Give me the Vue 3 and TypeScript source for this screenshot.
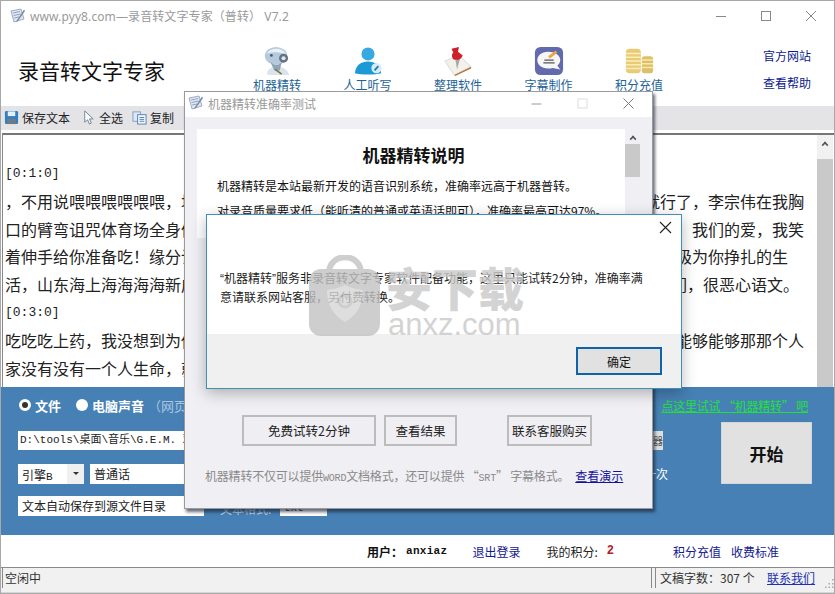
<script setup lang="ts">
interface TextLine { left: string; right?: string; pad?: number; mono?: boolean }
const navItems = [
  { key: 'robot', label: '机器精转' },
  { key: 'person', label: '人工听写' },
  { key: 'pin', label: '整理软件' },
  { key: 'sub', label: '字幕制作' },
  { key: 'coin', label: '积分充值' },
]
const lines: TextLine[] = [
  { left: '[0:1:0]', mono: true },
  { left: '，不用说喂喂喂喂喂喂，坦', right: '就行了，李宗伟在我胸' },
  { left: '口的臂弯诅咒体育场全身体', right: '我们的爱，我笑' },
  { left: '着伸手给你准备吃！缘分让', right: '极为你挣扎的生', pad: 16 },
  { left: '活，山东海上海海海海新成', right: '们，很恶心语文。', pad: 5 },
  { left: '[0:3:0]', mono: true },
  { left: '吃吃吃上药，我没想到为你', right: '能够能够那那个人' },
  { left: '家没有没有一个人生命，就' },
]
</script>

<template>
  <div class="win">
    <header class="titlebar">
      <svg class="appicon" width="16" height="16" viewBox="0 0 16 16">
        <path d="M1 3 L11 1 L14 11 L4 14 Z" fill="#dfe6f2" stroke="#8a9ab8" stroke-width="0.8" />
        <path d="M3 5 L10 3.5 M3.6 7.5 L10.6 6 M4.2 10 L9 9" stroke="#7f92b5" stroke-width="0.8" />
        <path d="M14 1.5 L7 12 L5.8 14 L8 13 L15 3 Z" fill="#7a8aa6" />
      </svg>
      <span class="titletext">www.pyy8.com—录音转文字专家（普转） V7.2</span>
      <div class="wincontrols">
        <svg width="12" height="12" viewBox="0 0 12 12"><path d="M1 6.5H11" stroke="#888" /></svg>
        <svg width="12" height="12" viewBox="0 0 12 12"><rect x="1.5" y="1.5" width="9" height="9" fill="none" stroke="#888" /></svg>
        <svg width="12" height="12" viewBox="0 0 12 12"><path d="M1 1L11 11M11 1L1 11" stroke="#888" /></svg>
      </div>
    </header>

    <section class="brandbar">
      <h1 class="brand">录音转文字专家</h1>
      <nav class="nav">
        <div v-for="item in navItems" :key="item.key" class="navitem">
          <svg v-if="item.key === 'robot'" class="navicon" viewBox="0 0 32 32">
            <path d="M5 30 C6 24 12 21 18 22 C25 23 28 27 29 31 L9 31 Z" fill="#dbe4ec" />
            <ellipse cx="15" cy="10.5" rx="12" ry="9.5" fill="#b5cbdd" />
            <path d="M5 8 C9 1 22 1 26 9 C19 6 12 6 5 8Z" fill="#e8f1f8" />
            <path d="M9 17 C13 21 18 21 21 17 L19 26 L13 26 Z" fill="#8fa4b5" />
            <circle cx="23" cy="13" r="4.8" fill="#63737f" />
            <circle cx="23" cy="13" r="2.2" fill="#dfe7ee" />
            <circle cx="10" cy="10" r="1.5" fill="#4d5d6a" />
            <path d="M14 25 L21 30" stroke="#6c7a3a" stroke-width="1.6" />
          </svg>
          <svg v-else-if="item.key === 'person'" class="navicon" viewBox="0 0 32 32">
            <circle cx="16" cy="8.5" r="7" fill="#36a9e1" />
            <path d="M2 29 C3 20 9 16.5 16 16.5 C23 16.5 29 20 30 29 C24 31 8 31 2 29Z" fill="#1b9ad6" />
            <circle cx="25" cy="23.5" r="5.5" fill="#d8ecf7" />
            <path d="M23 26 L27 21.5" stroke="#1b7fb5" stroke-width="2" />
          </svg>
          <svg v-else-if="item.key === 'pin'" class="navicon" viewBox="0 0 32 32">
            <path d="M2 16 L17 10 L30 22 L12 31 Z" fill="#f2f1ec" stroke="#d9d6cf" />
            <path d="M12 31 L30 22 L30 24 L13 32 Z" fill="#b4753f" />
            <path d="M13 13 L15 25 L18 14 Z" fill="#a9a9a9" />
            <path d="M9 3 L17 1 L16 6 L21 10 C20 14 15 16 11 14 C9 12 9 9 11 7 Z" fill="#cf1f2b" />
          </svg>
          <svg v-else-if="item.key === 'sub'" class="navicon" viewBox="0 0 32 32">
            <rect width="30" height="30" x="1" y="1" rx="6" fill="#6369ad" />
            <path d="M15 6 C22 6 28 9.5 28 15 C28 18 26 20 25 21 L28 25 L20 23.5 C18 24 17 24 15 24 C8 24 3.5 20 3.5 15 C3.5 10 8 6 15 6Z" fill="#f6f6f6" />
            <path d="M10 18H22M11 15H21" stroke="#555" stroke-width="1.3" />
            <path d="M16 12 L24 6" stroke="#e8a83a" stroke-width="3" />
          </svg>
          <svg v-else class="navicon" viewBox="0 0 32 32">
            <rect x="2" y="3" width="16" height="26" rx="4" fill="#e8cb78" />
            <path d="M2 8H18M2 12H18M2 16H18M2 20H18M2 24H18" stroke="#fbeeb4" stroke-width="1.5" />
            <rect x="19" y="11" width="12" height="18" rx="3" fill="#dfbe68" />
            <path d="M19 15H31M19 19H31M19 23H31" stroke="#f9e9a8" stroke-width="1.5" />
          </svg>
          <span class="navlabel">{{ item.label }}</span>
        </div>
      </nav>
      <div class="sidelinks">
        <a>官方网站</a>
        <a>查看帮助</a>
      </div>
    </section>

    <section class="toolbar">
      <svg class="tool-icon" viewBox="0 0 16 16">
        <rect x="1" y="1" width="14" height="14" rx="1.5" fill="#2f7fc1" />
        <rect x="4" y="1.5" width="8" height="5" fill="#e6f0f8" />
        <rect x="3.5" y="9" width="9" height="6" fill="#6e7a86" />
      </svg>
      <span class="tool-text">保存文本</span>
      <svg class="tool-icon cursor" viewBox="0 0 16 16">
        <path d="M4 1 L4 13 L7 10.5 L9 15 L11 14 L9 9.5 L13 9.5 Z" fill="#fff" stroke="#6d7f96" />
      </svg>
      <span class="tool-text">全选</span>
      <svg class="tool-icon copy" viewBox="0 0 16 16">
        <rect x="1" y="2" width="8" height="10" fill="#dce8f5" stroke="#7f9ec4" />
        <rect x="6" y="5" width="9" height="10" fill="#f5f9fd" stroke="#4f7fb5" />
        <path d="M8 8H13M8 10H13M8 12H13" stroke="#4f7fb5" />
      </svg>
      <span class="tool-text">复制</span>
    </section>

    <main class="editor">
      <div class="textcol">
        <div
          v-for="(line, i) in lines"
          :key="i"
          class="line"
          :style="line.pad ? { paddingRight: line.pad + 'px' } : undefined"
        >
          <span :class="{ mono: line.mono }">{{ line.left }}</span>
          <span v-if="line.right">{{ line.right }}</span>
        </div>
      </div>
      <div class="vscroll">
        <span class="chev"></span>
        <span class="vthumb"></span>
      </div>
    </main>

    <section class="panel">
      <div class="radios">
        <span class="radio checked"></span>
        <b class="radiolabel">文件</b>
        <span class="radio second"></span>
        <b class="radiolabel">电脑声音</b>
        <span class="hint">（网页</span>
        <a class="greenlink">点这里试试 “机器精转” 吧</a>
      </div>
      <div class="panelbody">
        <div class="fields">
          <div class="pathrow">
            <div class="pathinput">D:\tools\桌面\音乐\G.E.M. 邓紫棋</div>
            <span class="browse">器</span>
          </div>
          <div class="selectrow">
            <div class="engine"><span>引擎<i class="mini">B</i></span><span class="caret"></span></div>
            <div class="lang">普通话</div>
            <span class="once">一次</span>
          </div>
          <div class="saverow">
            <div class="savebox">文本自动保存到源文件目录</div>
            <span class="fmtlabel">文本格式:</span>
            <div class="fmt">txt</div>
          </div>
        </div>
        <button class="start">开始</button>
      </div>
    </section>

    <section class="userbar">
      <b class="userlabel">用户：</b><b class="username">anxiaz</b>
      <a class="logout">退出登录</a>
      <span class="score">我的积分:</span><b class="points">2</b>
      <a class="recharge">积分充值</a>
      <a class="fees">收费标准</a>
    </section>

    <footer class="statusbar">
      <div class="status-main">空闲中</div>
      <div class="status-count">文稿字数：307 个</div>
      <a class="contact">联系我们</a>
      <svg class="grip" width="10" height="10" viewBox="0 0 10 10">
        <path d="M8 1h1.5v1.5H8zM4.5 5H6v1.5H4.5zM8 5h1.5v1.5H8zM1 8.5h1.5V10H1zM4.5 8.5H6V10H4.5zM8 8.5h1.5V10H8z" fill="#aaa" />
      </svg>
    </footer>

    <!-- 机器精转准确率测试 floating window -->
    <div class="dlg-test">
      <div class="dlg-title">
        <svg class="appicon" width="16" height="16" viewBox="0 0 16 16">
          <path d="M1 3 L11 1 L14 11 L4 14 Z" fill="#dfe6f2" stroke="#8a9ab8" stroke-width="0.8" />
          <path d="M3 5 L10 3.5 M3.6 7.5 L10.6 6 M4.2 10 L9 9" stroke="#7f92b5" stroke-width="0.8" />
          <path d="M14 1.5 L7 12 L5.8 14 L8 13 L15 3 Z" fill="#7a8aa6" />
        </svg>
        <span>机器精转准确率测试</span>
        <div class="dlg-controls">
          <svg width="11" height="11" viewBox="0 0 11 11"><path d="M0.5 6H10.5" stroke="#999" /></svg>
          <svg width="11" height="11" viewBox="0 0 11 11"><rect x="1" y="1" width="9" height="9" fill="none" stroke="#ddd" /></svg>
          <svg width="11" height="11" viewBox="0 0 11 11"><path d="M0.5 0.5L10.5 10.5M10.5 0.5L0.5 10.5" stroke="#777" /></svg>
        </div>
      </div>
      <div class="dlg-body">
        <div class="intro">
          <div class="intro-text">
            <h2>机器精转说明</h2>
            <p>机器精转是本站最新开发的语音识别系统，准确率远高于机器普转。</p>
            <p>对录音质量要求低（能听清的普通或英语话即可），准确率最高可达97%。</p>
          </div>
          <div class="iscroll">
            <span class="chev"></span>
            <span class="ithumb"></span>
          </div>
        </div>
        <div class="actions">
          <button class="act a1">免费试转2分钟</button>
          <button class="act a2">查看结果</button>
          <button class="act a3">联系客服购买</button>
        </div>
        <div class="note">
          <span>机器精转不仅可以提供<i class="small">WORD</i>文档格式，还可以提供 “<i class="small">SRT</i>” 字幕格式。</span>
          <a>查看演示</a>
        </div>
      </div>
    </div>

    <!-- message box -->
    <div class="msgbox">
      <div class="msg-main">
        <svg class="msg-close" width="13" height="13" viewBox="0 0 13 13"><path d="M1 1L12 12M12 1L1 12" stroke="#222" stroke-width="1.1" /></svg>
        <p><span class="q">“</span>机器精转<span class="q">”</span>服务非录音转文字专家软件配备功能，这里只能试转2分钟，准确率满意请联系网站客服，另付费转换。</p>
      </div>
      <div class="msg-foot">
        <button class="ok">确定</button>
      </div>
    </div>

    <!-- watermark -->
    <div class="watermark">
      <svg width="72" height="82" viewBox="0 0 72 82">
        <path d="M20 18 C20 -3 52 -3 52 18" fill="none" stroke="#c2c2c2" stroke-width="6" />
        <rect x="0" y="14" width="71" height="67" rx="12" fill="#c2c2c2" />
        <path d="M36 30 C43 34 50 34 54 35 C54 50 48 60 36 67 C24 60 18 50 18 35 C22 34 29 34 36 30Z" fill="#d6d6d6" />
        <circle cx="36" cy="46" r="6" fill="none" stroke="#c2c2c2" stroke-width="3" />
      </svg>
      <div class="wm-text">
        <span class="wm-cn">安下载</span>
        <span class="wm-en">anxz.com</span>
      </div>
    </div>
  </div>
</template>

<style>
html, body { margin: 0; padding: 0; background: #fff; overflow: hidden; }
</style>

<style scoped>
.win {
  position: relative;
  width: 835px;
  height: 594px;
  box-sizing: border-box;
  display: flex;
  flex-direction: column;
  overflow: hidden;
  background: #fff;
  border: 1px solid #a8a8a8;
  font-family: "Noto Sans CJK SC", "Liberation Sans", sans-serif;
  font-size: 12px;
  color: #111;
}
a { cursor: pointer; }
button { font-family: inherit; padding: 0; }
.titlebar {
  height: 30px;
  display: flex;
  align-items: center;
  padding-left: 9px;
  flex: none;
}
.appicon { flex: none; }
.titletext {
  margin-left: 4px;
  color: #9a9a9a;
  font-size: 12px;
  font-family: "Noto Sans", "Noto Sans CJK SC", sans-serif;
  letter-spacing: 0.1px;
}
.wincontrols {
  margin-left: auto;
  display: flex;
  gap: 33px;
  padding-right: 17px;
}
.brandbar {
  height: 75px;
  flex: none;
  display: flex;
}
.brand {
  margin: 25px 0 0 17px;
  width: 200px;
  font-size: 21px;
  font-weight: 400;
  line-height: 28px;
  color: #111;
}
.nav {
  display: flex;
  margin-left: 35px;
  gap: 42.5px;
  padding-top: 15px;
  height: 60px;
}
.navitem {
  width: 48px;
  display: flex;
  flex-direction: column;
  align-items: center;
}
.navicon { width: 30px; height: 30px; flex: none; }
.navlabel {
  color: #1c6396;
  font-size: 12px;
  line-height: 16px;
  margin-top: 1px;
  white-space: nowrap;
}
.sidelinks {
  margin-left: auto;
  display: flex;
  flex-direction: column;
  gap: 11px;
  padding: 17px 23px 0 0;
}
.sidelinks a { color: #0a1a8c; font-size: 12px; line-height: 16px; }
.toolbar {
  height: 24px;
  flex: none;
  background: #e4e4e7;
  display: flex;
  align-items: center;
  padding: 0 0 2px 3px;
  box-sizing: border-box;
}
.tool-icon { width: 15px; height: 15px; flex: none; }
.tool-text { margin-left: 3px; color: #222; }
.cursor { margin-left: 11px; }
.copy { margin-left: 9px; }
.editor {
  margin-top: 3px;
  height: 254px;
  flex: none;
  display: flex;
  border-top: 2px solid #777;
  border-left: 1px solid #888;
  box-sizing: border-box;
  background: #fff;
  margin-left: 1px;
}
.textcol {
  flex: 1;
  min-width: 0;
  padding: 25px 13px 0 2px;
  overflow: hidden;
}
.line {
  display: flex;
  justify-content: space-between;
  height: 27.8px;
  line-height: 27.8px;
  font-size: 16px;
  color: #222;
  white-space: nowrap;
}
.mono { font-family: "Liberation Mono", monospace; font-size: 13px; }
.vscroll {
  width: 16px;
  flex: none;
  margin-right: 1px;
  display: flex;
  flex-direction: column;
  align-items: center;
  background: #f1f1f1;
}
.chev {
  width: 6px;
  height: 6px;
  margin-top: 7px;
  border-left: 2px solid #555;
  border-top: 2px solid #555;
  transform: rotate(45deg) scale(0.8);
  box-sizing: border-box;
  flex: none;
}
.vthumb {
  margin-top: 11px;
  flex: 1;
  width: 100%;
  background: #c9c9c9;
}
.panel {
  height: 148px;
  flex: none;
  box-sizing: border-box;
  background: #4680b4;
  padding: 9px 22px 0 17px;
  color: #fff;
}
.radios {
  height: 18px;
  display: flex;
  align-items: center;
}
.radio {
  width: 12px;
  height: 12px;
  border-radius: 50%;
  background: #fff;
  flex: none;
  box-sizing: border-box;
  margin-left: 1px;
}
.radio.checked { border: 3px solid #fff; background: #333; }
.radio.second { margin-left: 15px; }
.radiolabel { margin-left: 4px; font-size: 13px; color: #fff; }
.hint { margin-left: 4px; color: #a9c6df; font-size: 13px; }
.greenlink {
  margin-left: auto;
  margin-right: 4px;
  color: #22e03a;
  text-decoration: underline;
  font-size: 12px;
  letter-spacing: -0.2px;
}
.panelbody {
  display: flex;
  margin-top: 8px;
}
.fields {
  flex: 1;
  min-width: 0;
  padding-top: 9px;
  display: flex;
  flex-direction: column;
}
.pathrow { display: flex; height: 19px; padding-right: 58px; }
.pathinput {
  flex: 1;
  background: #fff;
  color: #222;
  font-family: "Liberation Mono", "Noto Sans CJK SC", monospace;
  font-size: 11px;
  line-height: 19px;
  padding-left: 2px;
  white-space: nowrap;
  overflow: hidden;
}
.browse {
  width: 10px;
  background: #ddd;
  color: #555;
  font-size: 10px;
  line-height: 19px;
  overflow: hidden;
}
.selectrow {
  margin-top: 14px;
  height: 20px;
  display: flex;
  color: #222;
}
.engine {
  width: 66px;
  background: #fff;
  display: flex;
  justify-content: space-between;
  align-items: center;
  padding-left: 4px;
  box-sizing: border-box;
  font-size: 12px;
}
.mini { font-style: normal; font-family: "Liberation Mono", monospace; font-size: 11px; }
.caret {
  width: 17px;
  height: 20px;
  background: #f0f0f0;
  position: relative;
}
.caret::after {
  content: "";
  position: absolute;
  left: 6px;
  top: 8px;
  border-left: 3px solid transparent;
  border-right: 3px solid transparent;
  border-top: 3px solid #333;
}
.lang {
  margin-left: 6px;
  width: 110px;
  background: #fff;
  padding-left: 4px;
  font-size: 12px;
  line-height: 20px;
}
.once { margin-left: auto; margin-right: 53px; color: #fff; font-size: 12px; line-height: 20px; }
.saverow { margin-top: 12px; height: 20px; display: flex; }
.savebox {
  width: 186px;
  background: #fff;
  color: #222;
  font-size: 12px;
  line-height: 20px;
  padding-left: 4px;
  box-sizing: border-box;
  white-space: nowrap;
}
.fmtlabel { margin-left: 16px; width: 60px; color: #bcd2e6; line-height: 25px; height: 20px; overflow: hidden; }
.fmt {
  width: 47px;
  height: 20px;
  background: #fff;
  color: #333;
  font-family: "Liberation Mono", monospace;
  font-size: 11px;
  line-height: 25px;
  padding-left: 4px;
  box-sizing: border-box;
  overflow: hidden;
}
.start {
  width: 91px;
  height: 62px;
  flex: none;
  background: #e1e1e1;
  border: 1px solid #cfd6dc;
  font-size: 17px;
  font-weight: 700;
  color: #111;
}
.userbar {
  height: 32px;
  flex: none;
  display: flex;
  align-items: center;
  padding-left: 366px;
  box-sizing: border-box;
}
.userlabel { font-size: 12px; }
.username { font-family: "Liberation Mono", monospace; font-size: 11px; margin-left: 3px; letter-spacing: 0.3px; }
.logout { margin-left: 25px; color: #12208c; }
.score { margin-left: 26px; color: #222; }
.points { margin-left: 9px; color: #b32025; font-family: "Liberation Mono", monospace; font-size: 12px; }
.recharge { margin-left: 59px; color: #12208c; }
.fees { margin-left: 10px; color: #12208c; }
.statusbar {
  flex: 1;
  min-height: 0;
  display: flex;
  align-items: stretch;
  background: #f1f1f1;
  border-top: 1px solid #8a8a8a;
  padding-bottom: 4px;
  border-bottom: 1px solid #d5d5d5;
}
.status-main {
  width: 650px;
  margin-left: 1px;
  border-left: 1px solid #888;
  padding-left: 2px;
  line-height: 20px;
  color: #333;
  flex: none;
  box-sizing: border-box;
  border-right: 1px solid #888;
}
.status-count {
  margin-left: 3px;
  border-left: 1px solid #888;
  padding-left: 4px;
  width: 103px;
  box-sizing: border-box;
  line-height: 20px;
  color: #333;
  white-space: nowrap;
  flex: none;
}
.contact { margin-left: 9px; color: #2030b0; text-decoration: underline; line-height: 20px; }
.grip { margin: 10px 0 0 auto; flex: none; }

.dlg-test {
  position: absolute;
  left: 183px;
  top: 90px;
  width: 469px;
  height: 418px;
  background: #f0eff3;
  border: 1px solid #9a9a9a;
  box-sizing: border-box;
  box-shadow: 2px 3px 3px rgba(20, 30, 50, 0.65);
  display: flex;
  flex-direction: column;
}
.dlg-title {
  height: 25px;
  flex: none;
  background: #fff;
  display: flex;
  align-items: center;
  padding: 0 0 3px 3px;
  box-sizing: border-box;
  color: #999;
  font-size: 12px;
  gap: 4px;
}
.dlg-controls {
  margin-left: auto;
  display: flex;
  gap: 35px;
  padding-right: 18px;
}
.dlg-body {
  flex: 1;
  min-height: 0;
  padding: 12px 0 0 12px;
  display: flex;
  flex-direction: column;
}
.intro { display: flex; height: 109px; flex: none; }
.intro-text {
  width: 428px;
  background: #fff;
  box-sizing: border-box;
  padding: 14px 0 0 20px;
  overflow: hidden;
  flex: none;
}
.intro-text h2 {
  margin: 0 15px 10px 0;
  text-align: center;
  font-size: 17px;
  line-height: 24px;
  font-weight: 700;
  color: #111;
}
.intro-text p {
  margin: 0 0 8px;
  font-size: 12px;
  line-height: 17px;
  color: #111;
  white-space: nowrap;
}
.iscroll {
  width: 15px;
  display: flex;
  flex-direction: column;
  align-items: center;
  flex: none;
}
.ithumb { margin-top: 2px; width: 100%; height: 33px; background: #c9c9c9; }
.actions {
  margin-top: 177px;
  margin-left: 45px;
  display: flex;
  height: 31px;
  flex: none;
}
.act {
  background: #efeef2;
  border: 2px solid #bcbcbc;
  font-size: 12.5px;
  color: #222;
  box-sizing: border-box;
}
.a1 { width: 134px; }
.a2 { width: 73px; margin-left: 8px; }
.a3 { width: 85px; margin-left: 50px; }
.note {
  margin-top: 21px;
  margin-left: 8px;
  display: flex;
  color: #8a8a8a;
  font-size: 12px;
  line-height: 18px;
  white-space: nowrap;
  letter-spacing: -0.2px;
}
.small { font-style: normal; font-family: "Liberation Mono", monospace; font-size: 10px; }
.note a { margin-left: 6px; color: #14149a; text-decoration: underline; letter-spacing: 0; }

.msgbox {
  position: absolute;
  left: 205px;
  top: 213px;
  width: 476px;
  height: 175px;
  border: 1px solid #3f8fb8;
  box-sizing: border-box;
  background: #fff;
  box-shadow: 0 4px 14px rgba(0, 0, 0, 0.28);
  display: flex;
  flex-direction: column;
}
.msg-main {
  position: relative;
  height: 119px;
  flex: none;
  box-sizing: border-box;
  padding: 54px 30px 0 13px;
}
.msg-close { position: absolute; right: 9px; top: 6px; }
.msg-main p {
  margin: 0;
  font-size: 12px;
  line-height: 18px;
  color: #222;
}
.q { font-family: "Liberation Sans", sans-serif; }
.msg-foot {
  flex: 1;
  background: #f0f0f0;
  display: flex;
  justify-content: flex-end;
  align-items: flex-start;
  padding: 13px 19px 0 0;
}
.ok {
  width: 86px;
  height: 28px;
  background: #e1e1e1;
  border: 2px solid #0f63a8;
  color: #111;
  font-size: 12px;
  box-sizing: border-box;
}

.watermark {
  position: absolute;
  left: 308px;
  top: 254px;
  display: flex;
  opacity: 0.8;
  pointer-events: none;
}
.wm-text {
  margin-left: 5px;
  padding-top: 6px;
  display: flex;
  flex-direction: column;
  align-items: flex-start;
  color: #c9c9c9;
}
.wm-cn {
  font-size: 46px;
  line-height: 50px;
  font-weight: 900;
}
.wm-en {
  font-family: "Liberation Sans", sans-serif;
  font-size: 31px;
  line-height: 28px;
  margin-left: 2px;
  margin-top: 0;
}
</style>
